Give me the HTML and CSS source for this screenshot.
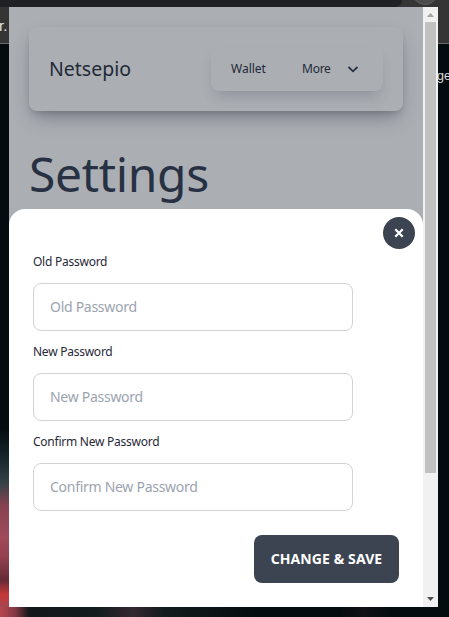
FILE: index.html
```html
<!DOCTYPE html>
<html lang="en">
<head>
<meta charset="utf-8">
<title>Netsepio</title>
<link rel="stylesheet" href="styles.css">
</head>
<body>
<div class="desktop">
  <div class="top-strip"><span class="tab"></span><span class="tab-button"></span></div>
  <aside class="side side-left"><div class="toolbar">r.</div></aside>
  <main class="popup">
    <div class="viewport">
      <section class="page">
        <nav class="navbar">
          <span class="brand">Netsepio</span>
          <div class="menu">
            <span class="wallet">Wallet</span>
            <span class="more">More</span>
            <svg class="chevron" viewBox="0 0 12 12"><path d="M1.5 4 6 8.3 10.5 4"/></svg>
          </div>
        </nav>
        <h1>Settings</h1>
      </section>
      <form class="modal">
        <button type="button" class="close" aria-label="Close"><svg viewBox="0 0 10 10"><path d="M1.3 1.3 8.7 8.7M8.7 1.3 1.3 8.7"/></svg></button>
        <label><span class="label">Old Password</span><span class="field">Old Password</span></label>
        <label><span class="label">New Password</span><span class="field">New Password</span></label>
        <label><span class="label">Confirm New Password</span><span class="field">Confirm New Password</span></label>
        <button type="button" class="save">CHANGE &amp; SAVE</button>
      </form>
    </div>
    <div class="scrollbar">
      <svg class="arrow up" viewBox="0 0 15 15"><path d="M4 10 7.5 6 11 10Z"/></svg>
      <div class="thumb"></div>
      <svg class="arrow down" viewBox="0 0 15 15"><path d="M4 5H11L7.5 9Z"/></svg>
    </div>
  </main>
  <aside class="side side-right"><div class="toolbar"></div><span class="outside-text">ge</span></aside>
  <div class="bottom-strip"></div>
</div>
</body>
</html>
```
FILE: styles.css
```css
* { box-sizing: border-box; }
body { margin: 0; overflow: hidden; font-family: "Noto Sans", sans-serif; color: #1f2937; }
.desktop {
  width: 449px; height: 617px; overflow: hidden;
  display: grid; grid-template: 7px 600px 10px / 9px 429px 11px;
  background: #050c10;
}
.top-strip { grid-column: 1 / 4; display: flex; background: #353535; overflow: hidden; }
.tab { width: 402px; background: #202124; border-bottom-right-radius: 8px; }
.tab-button { width: 26px; height: 26px; margin: -21px 0 0 10px; border-radius: 50%; background: #4c4c4c; border: 1px solid #5c5c5c; }
.side { overflow: hidden; min-width: 0; }
.toolbar { height: 37px; background: #353535; border-bottom: 1px solid #6a6a6a; color: #e4e4e4; font: 15px/37px "Liberation Sans", sans-serif; text-indent: -1px; }
.side-left {
  background: linear-gradient(#050c10 0 421px, #142429 448px, #354248 476px, #854250 498px, #a04a5b 530px, #94404f 550px, #652b36 573px, #c83838 588px, #a54451);
}
.side-right { background: #050c10; }
.outside-text { display: block; margin: 24px 0 0 -1px; color: #dedede; font: 12.5px/16px "Liberation Sans", sans-serif; }
.bottom-strip { grid-column: 1 / 4; background: linear-gradient(90deg, #b64650, #833a45 15px, #13171a 29px, #121b1e 95px, #342730 133px, #101b1e 165px, #050c10 260px 340px, #101115 365px, #050c10 390px); }
.popup { display: grid; grid-template-columns: 414px 15px; background: white; min-width: 0; }
.viewport { height: 600px; background: #abafb4; display: grid; grid-template-rows: 202px 398px; min-width: 0; }
.page { padding: 20px; min-width: 0; }
.navbar { width: 374px; height: 84px; padding: 0 20px; display: flex; align-items: center; justify-content: space-between; border-radius: 8px; background: #abafb4; box-shadow: 0 10px 20px -5px rgba(45, 48, 62, .42), 0 4px 6px -2px rgba(45, 48, 62, .22); }
.brand { font-size: 19.5px; line-height: 28px; letter-spacing: 0; }
.menu { width: 172px; height: 44px; padding: 0 24px 0 20px; display: flex; align-items: center; border-radius: 8px; background: #abafb4; box-shadow: 0 8px 14px -4px rgba(45, 48, 62, .23); font-size: 12px; line-height: 16px; }
.wallet { width: 71px; letter-spacing: 0; }
.more { width: 45px; letter-spacing: -.25px; }
.chevron { width: 12px; height: 12px; fill: none; stroke: #273244; stroke-width: 1.8; }
h1 { margin: 39px 0 0; font-size: 48px; font-weight: 400; line-height: 48px; letter-spacing: -.35px; color: #273143; }
.modal { margin: 0; background: #fff; border-radius: 16px 16px 0 0; padding: 8px 24px 24px; display: flex; flex-direction: column; }
button { border: 0; padding: 0; color: white; font-family: inherit; background: #3d4451; }
.close { width: 32px; height: 32px; margin-right: -16px; align-self: flex-end; border-radius: 50%; display: grid; place-items: center; flex: none; }
.close svg { width: 10px; height: 10px; fill: none; stroke: white; stroke-width: 2.2; }
label { display: flex; flex-direction: column; height: 90px; flex: none; }
.close + label { margin-top: 4px; }
.label { height: 30px; padding-top: 1px; font-size: 12px; line-height: 16px; letter-spacing: -.25px; }
.field { width: 320px; height: 48px; border: 1px solid #d1d3d6; border-radius: 8px; padding: 0 16px; font-size: 14px; line-height: 46px; letter-spacing: -.28px; color: #9ca3af; }
.save { width: 145px; height: 48px; border-radius: 8px; align-self: flex-end; margin-top: 12px; font-size: 14px; font-weight: 700; line-height: 48px; flex: none; letter-spacing: .1px; white-space: nowrap; }
.scrollbar { background: #f1f1f1; display: flex; flex-direction: column; align-items: center; }
.arrow { width: 15px; height: 15px; }
.up { fill: #a3a3a3; }
.down { fill: #505050; margin-top: auto; }
.thumb { width: 11px; height: 451px; background: #c1c1c1; }
```
